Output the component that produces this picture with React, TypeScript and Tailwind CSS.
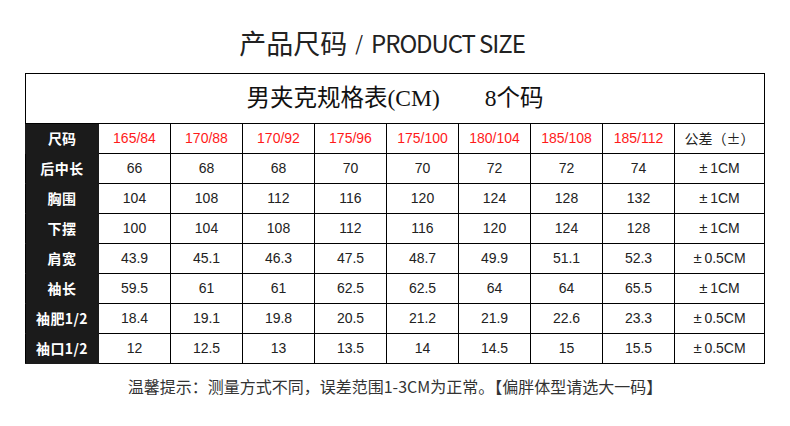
const sizes = [
  "165/84",
  "170/88",
  "170/92",
  "175/96",
  "175/100",
  "180/104",
  "185/108",
  "185/112",
];

const rows = [
  { label: "后中长", values: ["66", "68", "68", "70", "70", "72", "72", "74"], tol: "1CM" },
  { label: "胸围", values: ["104", "108", "112", "116", "120", "124", "128", "132"], tol: "1CM" },
  { label: "下摆", values: ["100", "104", "108", "112", "116", "120", "124", "128"], tol: "1CM" },
  { label: "肩宽", values: ["43.9", "45.1", "46.3", "47.5", "48.7", "49.9", "51.1", "52.3"], tol: "0.5CM" },
  { label: "袖长", values: ["59.5", "61", "61", "62.5", "62.5", "64", "64", "65.5"], tol: "1CM" },
  { label: "袖肥1/2", values: ["18.4", "19.1", "19.8", "20.5", "21.2", "21.9", "22.6", "23.3"], tol: "0.5CM" },
  { label: "袖口1/2", values: ["12", "12.5", "13", "13.5", "14", "14.5", "15", "15.5"], tol: "0.5CM" },
];

const cjk = "font-['Noto_Sans_CJK_SC',sans-serif]";
const num = "font-['Liberation_Sans','Noto_Sans_CJK_SC',sans-serif]";

export default function App() {
  return (
    <div className="flex h-[426px] w-[790px] flex-col bg-white">
      <div className="flex h-[73px] items-center justify-center gap-[8px] pr-[26px] pt-[12px] text-[#222]">
        <span className={`${cjk} text-[27px] leading-none`}>产品尺码</span>
        <span className={`${cjk} text-[20px] leading-none`}>/</span>
        <span className={`${cjk} text-[24px] leading-none tracking-[-0.045em]`}>
          PRODUCT SIZE
        </span>
      </div>

      <div className="ml-[25px] w-[739px]">
        <table className="w-[739px] table-fixed border-collapse">
          <colgroup>
            <col className="w-[73px]" />
            {sizes.map((s) => (
              <col key={s} className="w-[72px]" />
            ))}
            <col className="w-[90px]" />
          </colgroup>
          <tbody>
            <tr className="h-[50px]">
              <td
                colSpan={10}
                className="border border-black text-center text-[23.5px] text-[#111] font-['Liberation_Serif','Noto_Sans_CJK_SC',serif]"
              >
                男夹克规格表(CM)
                <span className="ml-[45px]">8个码</span>
              </td>
            </tr>
            <tr className="h-[30px]">
              <td className={`${cjk} border border-[#1b1b1b] bg-[#1b1b1b] text-center text-[14px] font-bold text-white`}>
                尺码
              </td>
              {sizes.map((s) => (
                <td
                  key={s}
                  className={`${num} border border-black text-center text-[14px] text-[#ff1a1a]`}
                >
                  {s}
                </td>
              ))}
              <td className={`${cjk} border border-black text-center text-[14px] text-[#222]`}>
                公差（±）
              </td>
            </tr>
            {rows.map((r) => (
              <tr key={r.label} className="h-[30px]">
                <td
                  className={`${cjk} border border-[#1b1b1b] border-l-black bg-[#1b1b1b] text-center text-[14px] font-bold tracking-[0.03em] text-white`}
                >
                  {r.label}
                </td>
                {r.values.map((v, i) => (
                  <td
                    key={i}
                    className={`${num} border border-black text-center text-[14px] text-[#222]`}
                  >
                    {v}
                  </td>
                ))}
                <td className={`${num} border border-black text-center text-[14px] text-[#222]`}>
                  <span className="inline-block w-[11px] text-left text-[15px]">±</span>
                  {r.tol}
                </td>
              </tr>
            ))}
          </tbody>
        </table>
      </div>

      <div
        className={`${cjk} flex flex-1 items-center justify-center pb-[18px] text-[16px] text-[#333]`}
      >
        温馨提示：测量方式不同，误差范围1-3CM为正常。【偏胖体型请选大一码】
      </div>
    </div>
  );
}
